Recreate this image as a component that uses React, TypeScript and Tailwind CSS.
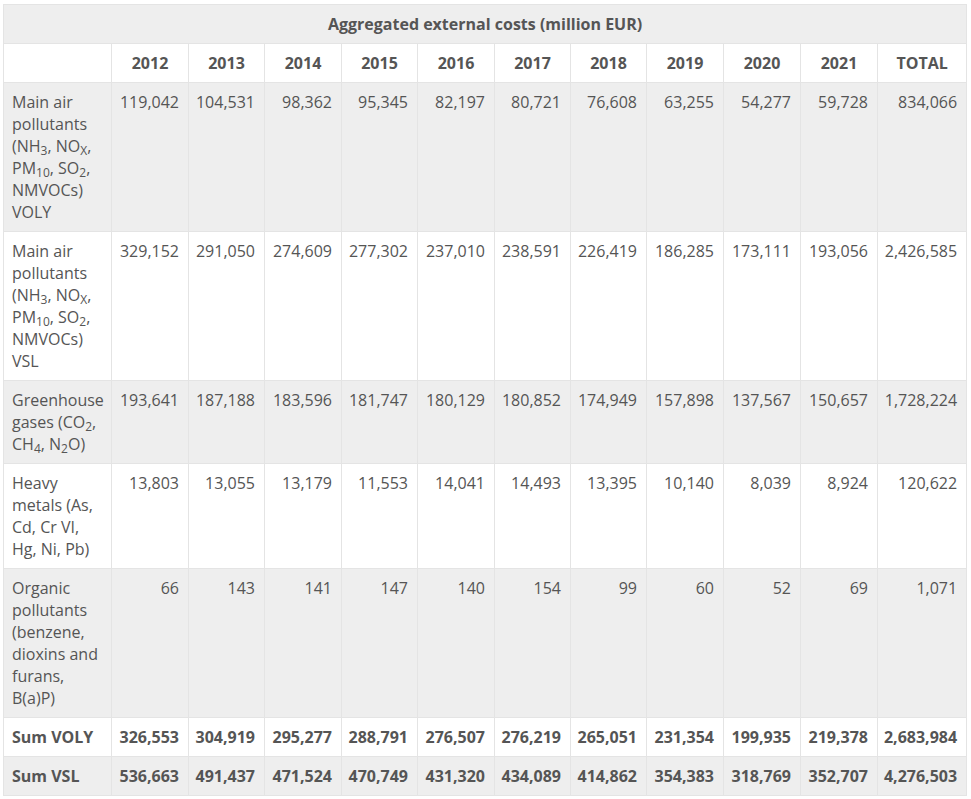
import * as React from "react";

type Row = {
  label: React.ReactNode;
  values: string[];
  bold?: boolean;
};

const years = ["2012", "2013", "2014", "2015", "2016", "2017", "2018", "2019", "2020", "2021", "TOTAL"];
const colWidths = [108, 77, 76, 77, 76, 77, 76, 76, 77, 77, 77, 89];

const rows: Row[] = [
  {
    label: (
      <>
        Main air pollutants (NH<sub>3</sub>, NO<sub>X</sub>, PM<sub>10</sub>, SO<sub>2</sub>, NMVOCs) VOLY
      </>
    ),
    values: ["119,042", "104,531", "98,362", "95,345", "82,197", "80,721", "76,608", "63,255", "54,277", "59,728", "834,066"],
  },
  {
    label: (
      <>
        Main air pollutants (NH<sub>3</sub>, NO<sub>X</sub>, PM<sub>10</sub>, SO<sub>2</sub>, NMVOCs) VSL
      </>
    ),
    values: ["329,152", "291,050", "274,609", "277,302", "237,010", "238,591", "226,419", "186,285", "173,111", "193,056", "2,426,585"],
  },
  {
    label: (
      <>
        Greenhouse gases (CO<sub>2</sub>, CH<sub>4</sub>, N<sub>2</sub>O)
      </>
    ),
    values: ["193,641", "187,188", "183,596", "181,747", "180,129", "180,852", "174,949", "157,898", "137,567", "150,657", "1,728,224"],
  },
  {
    label: "Heavy metals (As, Cd, Cr VI, Hg, Ni, Pb)",
    values: ["13,803", "13,055", "13,179", "11,553", "14,041", "14,493", "13,395", "10,140", "8,039", "8,924", "120,622"],
  },
  {
    label: "Organic pollutants (benzene, dioxins and furans, B(a)P)",
    values: ["66", "143", "141", "147", "140", "154", "99", "60", "52", "69", "1,071"],
  },
  {
    label: "Sum VOLY",
    bold: true,
    values: ["326,553", "304,919", "295,277", "288,791", "276,507", "276,219", "265,051", "231,354", "199,935", "219,378", "2,683,984"],
  },
  {
    label: "Sum VSL",
    bold: true,
    values: ["536,663", "491,437", "471,524", "470,749", "431,320", "434,089", "414,862", "354,383", "318,769", "352,707", "4,276,503"],
  },
];

export default function App() {
  return (
    <div className="min-h-screen bg-white pl-[3px] pt-[4px] font-['Open_Sans',sans-serif] text-[16px] leading-[22px] text-[#555555]">
      <table className="w-[963px] table-fixed border-collapse border border-[#e4e4e4]">
        <colgroup>
          {colWidths.map((w, i) => (
            <col key={i} style={{ width: w }} />
          ))}
        </colgroup>
        <thead>
          <tr className="bg-[#eeeeee]">
            <th colSpan={12} className="border border-[#e4e4e4] px-2 py-2 text-center font-bold">
              Aggregated external costs (million EUR)
            </th>
          </tr>
          <tr className="bg-white">
            <th className="border border-[#e4e4e4] px-2 py-2"></th>
            {years.map((y) => (
              <th key={y} className="border border-[#e4e4e4] px-2 py-2 text-center font-bold">
                {y}
              </th>
            ))}
          </tr>
        </thead>
        <tbody>
          {rows.map((r, i) => (
            <tr key={i} className={i % 2 === 0 ? "bg-[#eeeeee]" : "bg-white"}>
              <td className={`border border-[#e4e4e4] py-2 pl-2 pr-1 align-top ${r.bold ? "font-bold" : ""}`}>
                {r.label}
              </td>
              {r.values.map((v, j) => (
                <td
                  key={j}
                  className={`border border-[#e4e4e4] py-2 pl-1 pr-[9px] text-right align-top ${r.bold ? "font-bold" : ""}`}
                >
                  {v}
                </td>
              ))}
            </tr>
          ))}
        </tbody>
      </table>
    </div>
  );
}
